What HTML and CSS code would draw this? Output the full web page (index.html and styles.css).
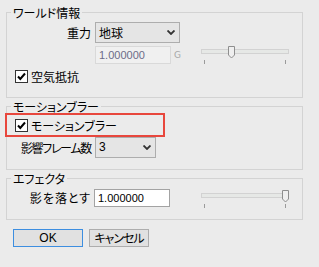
FILE: index.html
```html
<!DOCTYPE html>
<html lang="ja">
<head>
  <meta charset="UTF-8">
  <title>設定</title>
  <link rel="stylesheet" href="styles.css">
</head>
<body>
  <div class="dialog">
    <fieldset class="group world">
      <legend>ワールド情報</legend>
      <div class="row tall">
        <span class="caption">重力</span>
        <div class="select wide">
          <span>地球</span>
          <svg class="chevron" width="8" height="5" viewBox="0 0 8 5"><path d="M0.5 0.5L4 4L7.5 0.5" fill="none" stroke="#333" stroke-width="1.8"/></svg>
        </div>
      </div>
      <div class="row">
        <span class="caption"></span>
        <input class="num" type="text" value="1.000000" disabled>
        <span class="unit">G</span>
        <svg class="slider" width="92" height="19" viewBox="0 0 92 19">
          <rect x="2.5" y="3.5" width="87" height="4" fill="#e6e8e6" stroke="#d2d2d2"/>
          <path d="M29.5 0.5H35.5V9L32.5 12L29.5 9Z" fill="#efefef" stroke="#8e8e8e"/>
          <path d="M5.5 14v4M86.5 14v4" stroke="#9a9a9a"/>
        </svg>
      </div>
      <label class="check">
        <span class="box"><svg width="11" height="11" viewBox="0 0 11 11"><path d="M2 5.5L4.3 8L9 2.5" fill="none" stroke="#000" stroke-width="2"/></svg></span>
        空気抵抗
      </label>
    </fieldset>

    <fieldset class="group motion">
      <legend>モーションブラー</legend>
      <label class="check marked">
        <span class="box"><svg width="11" height="11" viewBox="0 0 11 11"><path d="M2 5.5L4.3 8L9 2.5" fill="none" stroke="#000" stroke-width="2"/></svg></span>
        モーションブラー
      </label>
      <div class="row tall">
        <span class="caption tight">影響フレーム数</span>
        <div class="select narrow">
          <span class="latin">3</span>
          <svg class="chevron" width="8" height="5" viewBox="0 0 8 5"><path d="M0.5 0.5L4 4L7.5 0.5" fill="none" stroke="#333" stroke-width="1.8"/></svg>
        </div>
      </div>
    </fieldset>

    <fieldset class="group effector">
      <legend>エフェクタ</legend>
      <div class="row">
        <span class="caption loose">影を落とす</span>
        <input class="num live" type="text" value="1.000000">
        <svg class="slider low" width="92" height="19" viewBox="0 0 92 19">
          <rect x="2.5" y="3.5" width="87" height="4" fill="#e6e8e6" stroke="#d2d2d2"/>
          <path d="M83.5 0.5H89.5V9L86.5 12L83.5 9Z" fill="#efefef" stroke="#8e8e8e"/>
          <path d="M5.5 14v4M86.5 14v4" stroke="#9a9a9a"/>
        </svg>
      </div>
    </fieldset>

    <div class="buttons">
      <button class="btn default">OK</button>
      <button class="btn cancel">キャンセル</button>
    </div>
  </div>
</body>
</html>
```

FILE: styles.css
```css
body {
  margin: 0;
  background-color: #ebebeb;
  font-family: "Noto Sans CJK JP", sans-serif;
  font-size: 12px;
  font-feature-settings: "palt";
  color: #000000;
}

.dialog {
  padding: 6px 16px 0 6px;
}

.group {
  margin: 0;
  padding: 0;
  border: 1px solid #d3d3d3;
  min-width: 0;
}

.group + .group {
  margin-top: 2px;
}

.group legend {
  margin-left: 4px;
  padding: 0 2px;
  height: 13px;
  line-height: 13px;
}

.world {
  padding-bottom: 13px;
}

.motion {
  padding-bottom: 11px;
}

.effector {
  padding-bottom: 12px;
}

.row {
  display: flex;
  align-items: flex-start;
  height: 18px;
  margin-top: 3px;
}

.row.tall {
  height: 21px;
  align-items: center;
}

.motion .row.tall {
  margin-top: 2px;
}

.effector .row {
  margin-top: 4px;
}

.caption {
  width: 84px;
  margin-right: 4px;
  text-align: right;
  line-height: 18px;
  white-space: nowrap;
}

.caption.tight {
  letter-spacing: -1.3px;
}

.caption.loose {
  letter-spacing: 1px;
  margin-right: 3px;
}

.row.tall .caption {
  line-height: 21px;
}

.select {
  display: flex;
  align-items: center;
  justify-content: space-between;
  box-sizing: border-box;
  height: 21px;
  padding: 0 4px 0 3px;
  border: 1px solid #adadad;
  background-color: #e5e5e5;
  line-height: 19px;
}

.select.wide {
  width: 85px;
}

.select.narrow {
  width: 61px;
}

.latin,
.num {
  font-family: "Liberation Sans", "Noto Sans CJK JP", sans-serif;
}

.num {
  box-sizing: border-box;
  width: 76px;
  height: 18px;
  margin: 0;
  padding: 0 3px;
  border: 1px solid #d9d9d9;
  background-color: #f0f0f0;
  color: #6c6c88;
  font-size: 11px;
  outline: none;
}

.num.live {
  border-color: #a3a3a3;
  background-color: #ffffff;
  color: #000000;
}

.unit {
  margin-left: 3px;
  font-family: "DejaVu Sans", sans-serif;
  font-size: 9px;
  line-height: 18px;
  color: #a8a8a8;
}

.slider {
  display: block;
  margin-left: auto;
  margin-right: 11px;
}

.slider.low {
  margin-top: 1px;
}

.check {
  display: flex;
  align-items: center;
  height: 15px;
  margin: 5px 0 0 8px;
  gap: 3px;
  line-height: 15px;
}

.check.marked {
  box-sizing: border-box;
  width: 156px;
  height: 20px;
  margin: 2px 0 0 0;
  padding-left: 8px;
  outline: 2px solid #e8473d;
}

.box {
  display: flex;
  align-items: center;
  justify-content: center;
  box-sizing: border-box;
  width: 13px;
  height: 13px;
  border: 1px solid #333333;
  background-color: #ffffff;
}

.buttons {
  display: flex;
  gap: 6px;
  margin: 9px 0 0 7px;
}

.btn {
  box-sizing: border-box;
  height: 18px;
  padding: 0;
  border: 1px solid #adadad;
  background-color: #e1e1e1;
  font-family: "Liberation Sans", "Noto Sans CJK JP", sans-serif;
  font-size: 12px;
  font-feature-settings: "palt";
  line-height: 16px;
  white-space: nowrap;
  color: #000000;
}

.btn.default {
  width: 70px;
  border-color: #3d8ee0;
}

.btn.cancel {
  width: 60px;
  font-family: "Noto Sans CJK JP", sans-serif;
  letter-spacing: -1px;
}
```
